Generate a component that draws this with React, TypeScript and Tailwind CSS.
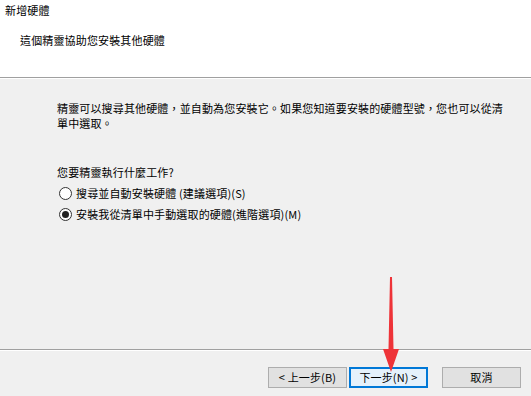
import React from "react";

const font = { fontFamily: '"Noto Sans CJK TC", "Noto Sans", sans-serif' };

function Radio({ checked }: { checked?: boolean }) {
  return (
    <span className="relative inline-flex h-[13px] w-[13px] shrink-0 items-center justify-center rounded-full border border-[#333333] bg-white">
      {checked && <span className="h-[7px] w-[7px] rounded-full bg-[#222222]" />}
    </span>
  );
}

export default function App() {
  return (
    <div
      className="relative h-[396px] w-[531px] overflow-hidden bg-[#f0f0f0] text-[11px] leading-[13px] tracking-[0.15px] text-black"
      style={font}
    >
      <div className="h-[77px] bg-white">
        <div className="pl-[5px] pt-[4px]">新增硬體</div>
        <div className="pl-[20px] pt-[17px]">這個精靈協助您安裝其他硬體</div>
      </div>
      <div className="h-px bg-[#a0a0a0]" />
      <div className="h-px bg-white" />
      <div className="h-[270px] pl-[57px] pr-[20px]">
        <p className="pt-[22px] leading-[15px]">
          精靈可以搜尋其他硬體，並自動為您安裝它。如果您知道要安裝的硬體型號，您也可以從清單中選取。
        </p>
        <p className="pt-[35px]">您要精靈執行什麼工作?</p>
        <div className="flex flex-col gap-[8px] pl-[2px] pt-[8px]">
          <label className="flex items-center gap-[4px]">
            <Radio />
            <span>搜尋並自動安裝硬體 (建議選項)(S)</span>
          </label>
          <label className="flex items-center gap-[4px]">
            <Radio checked />
            <span>安裝我從清單中手動選取的硬體(進階選項)(M)</span>
          </label>
        </div>
      </div>
      <div className="h-px bg-[#a0a0a0]" />
      <div className="h-px bg-white" />
      <div className="flex pl-[268px] pt-[16px]">
        <button className="flex h-[21px] w-[79px] items-center justify-center border border-[#adadad] bg-[#e1e1e1]">
          &lt; 上一步(B)
        </button>
        <button className="ml-[2px] flex h-[21px] w-[79px] items-center justify-center border-2 border-[#0078d7] bg-[#e5f1fb]">
          下一步(N) &gt;
        </button>
        <button className="ml-[14px] flex h-[21px] w-[79px] items-center justify-center border border-[#adadad] bg-[#e1e1e1]">
          取消
        </button>
      </div>
      <svg
        className="pointer-events-none absolute left-[378px] top-[276px]"
        width="26"
        height="100"
        viewBox="0 0 26 100"
      >
        <polygon points="12,1 14,1 15.5,73 21,73 13,96 5,73 10.5,73" fill="#ee3338" />
      </svg>
    </div>
  );
}
